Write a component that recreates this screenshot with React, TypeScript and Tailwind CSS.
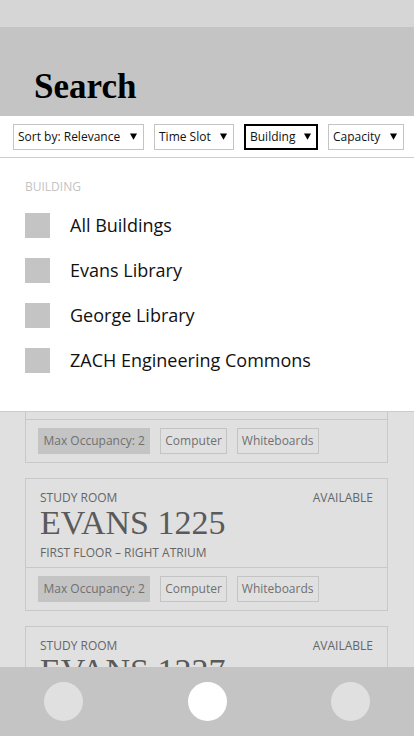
import React from 'react';

const sans = "font-['Open_Sans','Liberation_Sans',sans-serif]";
const serif = "font-['Liberation_Serif','DejaVu_Serif',serif]";

type Room = { name: string; floor: string };

const rooms: Room[] = [
  { name: 'EVANS 1221', floor: 'FIRST FLOOR – LEFT ATRIUM' },
  { name: 'EVANS 1223', floor: 'FIRST FLOOR – RIGHT ATRIUM' },
  { name: 'EVANS 1225', floor: 'FIRST FLOOR – RIGHT ATRIUM' },
  { name: 'EVANS 1227', floor: 'FIRST FLOOR – RIGHT ATRIUM' },
];

const buildings = ['All Buildings', 'Evans Library', 'George Library', 'ZACH Engineering Commons'];

function Arrow() {
  return (
    <svg width="7" height="7" viewBox="0 0 7 7" className="shrink-0">
      <path d="M0 0.5 H7 L3.5 6.8 Z" fill="#000" />
    </svg>
  );
}

function Select({ label, width, active }: { label: string; width: string; active?: boolean }) {
  return (
    <div
      className={`${width} h-[26px] flex items-center justify-between bg-white text-[12px] text-[#111] ${
        active ? 'border-2 border-black pl-[4px] pr-[5px]' : 'border border-[#c4c4c4] pl-[4px] pr-[6px]'
      }`}
    >
      <span>{label}</span>
      <Arrow />
    </div>
  );
}

function Tag({ text, filled }: { text: string; filled?: boolean }) {
  return (
    <div
      className={`h-[26px] flex items-center text-[12px] text-[#707070] ${
        filled ? 'bg-[#c4c4c4] px-[5.5px]' : 'border border-[#c4c4c4] px-[4px]'
      }`}
    >
      {text}
    </div>
  );
}

function RoomCard({ room }: { room: Room }) {
  return (
    <div className="border border-[#c8c8c8] shrink-0">
      <div className="px-[14px] pt-[11px] pb-[6px]">
        <div className="flex justify-between text-[12px] leading-[16px] text-[#666]">
          <span>STUDY ROOM</span>
          <span>AVAILABLE</span>
        </div>
        <div className={`${serif} text-[34px] leading-[33px] text-[#5a5a5a]`}>{room.name}</div>
        <div className="mt-[6px] text-[12px] leading-[16px] text-[#666]">{room.floor}</div>
      </div>
      <div className="border-t border-[#c8c8c8] px-[12px] py-[8px] flex gap-[10px]">
        <Tag text="Max Occupancy: 2" filled />
        <Tag text="Computer" />
        <Tag text="Whiteboards" />
      </div>
    </div>
  );
}

export default function App() {
  return (
    <div className={`${sans} w-[414px] h-[736px] flex flex-col overflow-hidden bg-[#e0e0e0]`}>
      {/* Status bar */}
      <div className="h-[27px] shrink-0 bg-[#d6d6d6]" />

      {/* Header */}
      <div className="h-[89px] shrink-0 bg-[#c4c4c4] flex items-end pl-[34px] pb-[12px]">
        <h1 className={`${serif} text-[35px] leading-[35px] font-bold text-black`}>Search</h1>
      </div>

      {/* Filters */}
      <div className="h-[42px] shrink-0 bg-white border-b border-[#cccccc] flex items-center pl-[13px] gap-[10px]">
        <Select label="Sort by: Relevance" width="w-[131px]" />
        <Select label="Time Slot" width="w-[80px]" />
        <Select label="Building" width="w-[74px]" active />
        <Select label="Capacity" width="w-[76px]" />
      </div>

      {/* Results */}
      <div className="relative flex-1 overflow-hidden">
        <div className="flex flex-col gap-[15px] pt-[24px] pl-[25px] pr-[26px]">
          {rooms.map((r) => (
            <RoomCard key={r.name} room={r} />
          ))}
        </div>

        {/* Building dropdown */}
        <div className="absolute top-0 left-0 right-0 bg-white border-b border-[#cccccc] pt-[21px] pb-[38px] pl-[25px]">
          <div className="text-[12px] leading-[16px] text-[#c4c4c4]">BUILDING</div>
          <div className="mt-[18px] flex flex-col gap-[20px]">
            {buildings.map((b) => (
              <div key={b} className="flex items-center h-[25px]">
                <div className="w-[25px] h-[25px] bg-[#c4c4c4] shrink-0" />
                <span className="ml-[20px] text-[18px] leading-[25px] text-[#111]">{b}</span>
              </div>
            ))}
          </div>
        </div>
      </div>

      {/* Bottom nav */}
      <div className="h-[69px] shrink-0 bg-[#c4c4c4] flex items-center justify-between px-[44px]">
        <div className="w-[39px] h-[39px] rounded-full bg-[#e0e0e0]" />
        <div className="w-[39px] h-[39px] rounded-full bg-white" />
        <div className="w-[39px] h-[39px] rounded-full bg-[#e0e0e0]" />
      </div>
    </div>
  );
}
